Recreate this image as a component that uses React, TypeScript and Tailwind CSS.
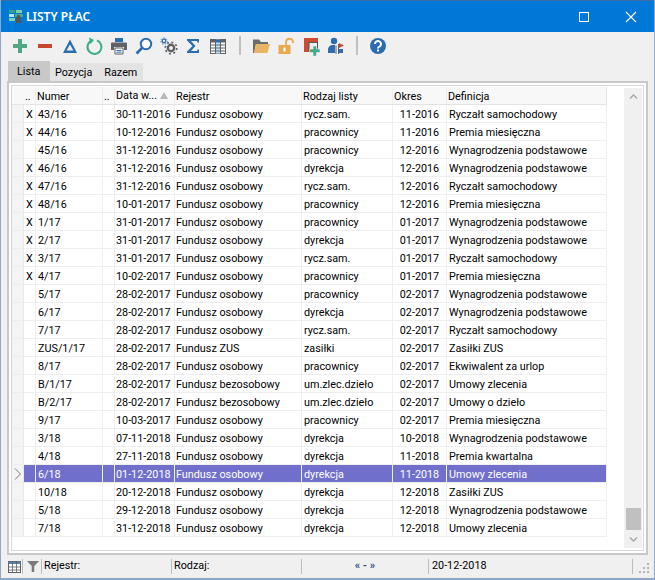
import React from "react";

const rows: [string, string, string, string, string, string, string][] = [
  ["X","43/16","30-11-2016","Fundusz osobowy","rycz.sam.","11-2016","Ryczałt samochodowy"],
  ["X","44/16","10-12-2016","Fundusz osobowy","pracownicy","11-2016","Premia miesięczna"],
  ["","45/16","31-12-2016","Fundusz osobowy","pracownicy","12-2016","Wynagrodzenia podstawowe"],
  ["X","46/16","31-12-2016","Fundusz osobowy","dyrekcja","12-2016","Wynagrodzenia podstawowe"],
  ["X","47/16","31-12-2016","Fundusz osobowy","rycz.sam.","12-2016","Ryczałt samochodowy"],
  ["X","48/16","10-01-2017","Fundusz osobowy","pracownicy","12-2016","Premia miesięczna"],
  ["X","1/17","31-01-2017","Fundusz osobowy","pracownicy","01-2017","Wynagrodzenia podstawowe"],
  ["X","2/17","31-01-2017","Fundusz osobowy","dyrekcja","01-2017","Wynagrodzenia podstawowe"],
  ["X","3/17","31-01-2017","Fundusz osobowy","rycz.sam.","01-2017","Ryczałt samochodowy"],
  ["X","4/17","10-02-2017","Fundusz osobowy","pracownicy","01-2017","Premia miesięczna"],
  ["","5/17","28-02-2017","Fundusz osobowy","pracownicy","02-2017","Wynagrodzenia podstawowe"],
  ["","6/17","28-02-2017","Fundusz osobowy","dyrekcja","02-2017","Wynagrodzenia podstawowe"],
  ["","7/17","28-02-2017","Fundusz osobowy","rycz.sam.","02-2017","Ryczałt samochodowy"],
  ["","ZUS/1/17","28-02-2017","Fundusz ZUS","zasiłki","02-2017","Zasiłki ZUS"],
  ["","8/17","28-02-2017","Fundusz osobowy","pracownicy","02-2017","Ekwiwalent za urlop"],
  ["","B/1/17","28-02-2017","Fundusz bezosobowy","um.zlec.dzieło","02-2017","Umowy zlecenia"],
  ["","B/2/17","28-02-2017","Fundusz bezosobowy","um.zlec.dzieło","02-2017","Umowy o dzieło"],
  ["","9/17","10-03-2017","Fundusz osobowy","pracownicy","02-2017","Premia miesięczna"],
  ["","3/18","07-11-2018","Fundusz osobowy","dyrekcja","10-2018","Wynagrodzenia podstawowe"],
  ["","4/18","27-11-2018","Fundusz osobowy","dyrekcja","11-2018","Premia kwartalna"],
  ["","6/18","01-12-2018","Fundusz osobowy","dyrekcja","11-2018","Umowy zlecenia"],
  ["","10/18","20-12-2018","Fundusz osobowy","dyrekcja","12-2018","Zasiłki ZUS"],
  ["","5/18","29-12-2018","Fundusz osobowy","dyrekcja","12-2018","Wynagrodzenia podstawowe"],
  ["","7/18","31-12-2018","Fundusz osobowy","dyrekcja","12-2018","Umowy zlecenia"],
];

function Icon({ w = 20, children }: { w?: number; children: React.ReactNode }) {
  return (
    <svg width={w} height={20} viewBox="0 0 20 20" className="shrink-0">
      {children}
    </svg>
  );
}

function Toolbar() {
  return (
    <div className="h-[27px] flex items-center pl-[9px]">
      <div className="flex items-center gap-[4.75px]">
        <Icon><path d="M8 3h4v5h5v4h-5v5H8v-5H3V8h5z" fill="#4fa884" /></Icon>
        <Icon><rect x="3" y="8" width="14" height="4" fill="#c8452f" /></Icon>
        <Icon><path d="M10 3.5 17 17H3z M10 8.5 6.6 14.5h6.8z" fill="#2a6db0" fillRule="evenodd" /></Icon>
        <Icon><path d="M7.5 4.6A7 7 0 1 0 13 4.4" fill="none" stroke="#38ab87" strokeWidth="2" /><path d="M5 1.5 10 4 6.5 8z" fill="#38ab87" /></Icon>
        <Icon><path d="M6 2h8v4H6z" fill="#2a6db0" /><path d="M3 6.5h14a1 1 0 0 1 1 1V14h-3v-3H5v3H2V7.5a1 1 0 0 1 1-1z" fill="#5e6266" /><path d="M6 12h8v6H6z" fill="#fff" stroke="#5e6266" /><path d="M7.5 14.5h5M7.5 16.2h5" stroke="#2a6db0" /></Icon>
        <Icon><circle cx="12" cy="8" r="5.2" fill="#fff" stroke="#2a6db0" strokeWidth="2" /><path d="M8 12 2.5 17.5" stroke="#2a6db0" strokeWidth="2.6" /></Icon>
        <Icon><circle cx="12" cy="12" r="3.2" fill="none" stroke="#5e6266" strokeWidth="2.4" /><circle cx="12" cy="12" r="5.8" fill="none" stroke="#5e6266" strokeWidth="1.6" strokeDasharray="2 2.5" /><circle cx="5" cy="5" r="1.8" fill="none" stroke="#2a6db0" strokeWidth="1.3" /><circle cx="5" cy="5" r="3.2" fill="none" stroke="#2a6db0" strokeWidth="1" strokeDasharray="1.2 1.6" /></Icon>
        <Icon><path d="M4 3h12v3.5h-1.5L14 5H8l4.5 5L8 15h6l.5-1.5H16V17H4v-1.5L9.5 10 4 4.5z" fill="#2a6db0" /></Icon>
        <Icon><rect x="2.5" y="3.5" width="15" height="14" fill="#fff" stroke="#5e6266" /><rect x="7.5" y="3.5" width="5" height="14" fill="#bfe0f5" /><rect x="2.5" y="3.5" width="5" height="3" fill="#5e6266" /><rect x="7.5" y="3.5" width="5" height="3" fill="#2a6db0" /><rect x="12.5" y="3.5" width="5" height="3" fill="#5e6266" /><path d="M2.5 9h15M2.5 12h15M2.5 15h15M7.5 3.5v14M12.5 3.5v14" stroke="#5e6266" strokeWidth="1" fill="none" /></Icon>
      </div>
      <div className="w-[2px] h-[19px] bg-[#c0c0c0] ml-[11px] mr-[10px]" />
      <div className="flex items-center gap-[4.75px]">
        <Icon><path d="M2 5V3.5h6L10 6h7v2H5L3 17H2z" fill="#6b6b6b" /><path d="M5 8h14l-2.5 9H3z" fill="#e9b565" /></Icon>
        <Icon><path d="M10 9V5.5a3.6 3.6 0 0 1 7 0V7" fill="none" stroke="#e9a94f" strokeWidth="1.8" /><rect x="2.5" y="9" width="12" height="9" fill="#e9a94f" /><rect x="7.5" y="11.5" width="2" height="4" fill="#fff" /></Icon>
        <Icon><rect x="3" y="2" width="14" height="14" fill="#cd4b33" /><rect x="8" y="6.5" width="8.5" height="8" fill="#f0f0f0" stroke="#555" /><path d="M12 10h3.5v3H19v3.5h-3.5V20H12v-3.5H8.5V13H12z" fill="#45a888" stroke="#f0f0f0" strokeWidth="0.6" /></Icon>
        <Icon><circle cx="9" cy="5" r="3.2" fill="#2a6db0" /><path d="M3 17v-4a5 5 0 0 1 5-4h2v8z" fill="#2a6db0" /><path d="M10.5 9.5h1V18h-1zM13 8h1v10h-1z" fill="#5e6266" /><path d="M14 7l5 2.5-5 2.5z" fill="#cd4b33" /><path d="M14 13h4v4h-4z" fill="#2a6db0" /></Icon>
      </div>
      <div className="w-[2px] h-[19px] bg-[#c0c0c0] ml-[11px] mr-[10px]" />
      <Icon>
        <circle cx="10" cy="10" r="8" fill="#2a6db0" />
        <path d="M7 8a3 3 0 1 1 4.6 2.5c-1 .6-1.6 1-1.6 2" fill="none" stroke="#fff" strokeWidth="2" />
        <rect x="9" y="13.5" width="2" height="2" fill="#fff" />
      </Icon>
    </div>
  );
}

const cellBase = "h-full border-r border-[#eeeeee] overflow-hidden whitespace-nowrap";

function Table() {
  return (
    <div className="flex-1 min-w-0">
      <div className="w-[595px] h-[18px] flex items-center bg-[#f8f8f8] border-b border-[#e4e4e4] text-black leading-[19px]">
        <div className="w-[12px]" />
        <div className="w-[12px] h-full border-r border-[#eeeeee] pl-[1px]">..</div>
        <div className="w-[67px] h-full border-r border-[#eeeeee] pl-[1px]">Numer</div>
        <div className="w-[12px] h-full border-r border-[#eeeeee] pl-[1px]">..</div>
        <div className="w-[60px] h-full border-r border-[#eeeeee] pl-[1px] flex items-center">
          <span>Data w...</span>
          <span className="ml-[3px] w-0 h-0 border-l-[4px] border-r-[4px] border-b-[7px] border-l-transparent border-r-transparent border-b-[#b8b8b8]" />
        </div>
        <div className="w-[127px] h-full border-r border-[#eeeeee] pl-[1px]">Rejestr</div>
        <div className="w-[91px] h-full border-r border-[#eeeeee] pl-[1px]">Rodzaj listy</div>
        <div className="w-[54px] h-full border-r border-[#eeeeee] pl-[1px]">Okres</div>
        <div className="w-[160px] h-full border-r border-[#e4e4e4] pl-[1px]">Definicja</div>
      </div>
      {rows.map((r, i) => {
        const sel = i === 20;
        return (
          <div key={i} className={`w-[595px] h-[18px] flex leading-[19px] border-b border-[#eeeeee] ${sel ? "bg-[#7070cc] text-white" : "text-black"}`}>
            <div className="w-[12px] h-full bg-[#f4f4f4] border-r border-[#e8e8e8] flex items-center justify-center shrink-0">
              {sel && (
                <svg width="8" height="12" viewBox="0 0 8 12">
                  <path d="M1 .5 6.5 6 1 11.5" fill="none" stroke="#777" />
                </svg>
              )}
            </div>
            <div className={`w-[12px] shrink-0 pl-[2px] ${cellBase}`}>{r[0]}</div>
            <div className={`w-[67px] shrink-0 pl-[2px] ${cellBase}`}>{r[1]}</div>
            <div className={`w-[12px] shrink-0 ${cellBase}`} />
            <div className={`w-[60px] shrink-0 pl-[1px] ${cellBase}`}>{r[2]}</div>
            <div className={`w-[127px] shrink-0 pl-[1px] ${cellBase}`}>{r[3]}</div>
            <div className={`w-[91px] shrink-0 pl-[2px] ${cellBase}`}>{r[4]}</div>
            <div className={`w-[54px] shrink-0 text-center ${cellBase}`}>{r[5]}</div>
            <div className={`w-[160px] shrink-0 pl-[2px] ${cellBase}`}>{r[6]}</div>
          </div>
        );
      })}
    </div>
  );
}

function Scrollbar() {
  return (
    <div className="w-[18px] ml-[17px] mr-[1px] mt-[1px] mb-[2px] bg-[#f0f0f0] flex flex-col items-center justify-between shrink-0">
      <div className="flex-1 flex flex-col items-center w-full">
        <svg width="9" height="18" viewBox="0 0 9 18" className="shrink-0">
          <path d="M1 10.5 4.5 7 8 10.5" fill="none" stroke="#a6a6a6" strokeWidth="1.4" />
        </svg>
        <div className="flex-1" />
        <div className="w-[15px] h-[22px] bg-[#c0c0c0]" />
      </div>
      <svg width="9" height="18" viewBox="0 0 9 18" className="shrink-0">
        <path d="M1 7.5 4.5 11 8 7.5" fill="none" stroke="#a6a6a6" strokeWidth="1.4" />
      </svg>
    </div>
  );
}

function Sep() {
  return <div className="w-[1px] h-[15px] bg-[#bcbcbc] shrink-0" />;
}

function StatusBar() {
  return (
    <div className="h-[23px] flex items-center pl-[7px] text-black">
      <svg width="13" height="12" viewBox="0 0 13 12" className="shrink-0">
        <rect x=".5" y=".5" width="12" height="11" fill="#fff" stroke="#5e6266" />
        <rect x=".5" y=".5" width="12" height="2.5" fill="#5e7fa6" />
        <path d="M0 6h13M0 9h13M4.5 0v12M8.5 0v12" stroke="#5e6266" strokeWidth=".8" />
      </svg>
      <div className="w-[1px] h-[15px] bg-[#bcbcbc] ml-[1px] shrink-0" />
      <svg width="12" height="13" viewBox="0 0 14 13" className="ml-[4px] shrink-0">
        <path d="M0 0h14L8.5 6v7h-3V6z" fill="#7a7a7a" />
      </svg>
      <div className="w-[1px] h-[15px] bg-[#bcbcbc] ml-[2px] shrink-0" />
      <div className="w-[129px] pl-[2px]">Rejestr:</div>
      <Sep />
      <div className="w-[129px] pl-[2px]">Rodzaj:</div>
      <Sep />
      <div className="w-[126px] text-center text-[#2f4f7a] font-bold">« - »</div>
      <Sep />
      <div className="w-[203px] pl-[3px]">20-12-2018</div>
      <Sep />
      <svg width="12" height="12" viewBox="0 0 12 12" className="ml-[5px] mt-[3px] shrink-0">
        <path d="M9 1h2v2H9zM5 5h2v2H5zM9 5h2v2H9zM1 9h2v2H1zM5 9h2v2H5zM9 9h2v2H9z" fill="#b4b4b4" />
      </svg>
    </div>
  );
}

export default function App() {
  return (
    <div
      className="w-[655px] h-[580px] bg-[#f0f0f0] flex flex-col border-x border-b-2 border-[#8fa8c8] overflow-hidden text-[10.8px]"
      style={{ fontFamily: 'Roboto, sans-serif' }}
    >
      <div className="h-[32px] bg-[#0078d7] border-t border-[#3a6ea5] flex items-center shrink-0 text-white pl-[7px]" style={{ fontFamily: '"Noto Sans", sans-serif' }}>
        <svg width="16" height="20" viewBox="0 0 16 20" className="shrink-0">
          <rect x="1" y="3" width="6" height="3" fill="#2fa37c" />
          <rect x="8" y="3" width="6" height="3" fill="#7fd0a8" />
          <rect x="1" y="7" width="5" height="3" fill="#bfe0f5" />
          <rect x="7" y="7" width="8" height="3" fill="#4fa884" />
          <rect x="1" y="11" width="6" height="3" fill="#7fd0a8" />
          <rect x="8" y="11" width="5" height="5" fill="#555" />
          <circle cx="10.5" cy="10" r="2" fill="#555" />
        </svg>
        <div className="ml-[2px] text-[12px] font-semibold">LISTY PŁAC</div>
        <div className="flex-1" />
        <div className="w-[10px] h-[10px] border border-white mr-[36px]" />
        <svg width="12" height="12" viewBox="0 0 12 12" className="mr-[17px]">
          <path d="M1 1 11 11M11 1 1 11" stroke="#fff" strokeWidth="1.1" />
        </svg>
      </div>
      <div className="h-[28px] shrink-0">
        <Toolbar />
      </div>
      <div className="h-[21px] flex items-end pl-[7px] shrink-0 text-black">
        <div className="w-[42px] h-[20px] bg-[#c8c8c8] pl-[9px] leading-[21px]">Lista</div>
        <div className="w-[93px] h-[18px] bg-[#e3e3e3] flex items-center leading-[19px]">
          <span className="pl-[5px]">Pozycja</span>
          <span className="pl-[12px]">Razem</span>
        </div>
      </div>
      <div className="mx-[6px] h-[474px] border-2 border-[#c8c8c8] bg-white shrink-0 p-[2px]">
        <div className="h-full border border-[#d8d8d8] bg-white flex pt-[1px]">
          <Table />
          <Scrollbar />
        </div>
      </div>
      <StatusBar />
    </div>
  );
}
